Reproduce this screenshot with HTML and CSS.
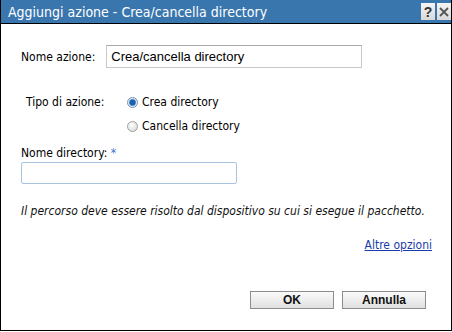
FILE: index.html
```html
<!DOCTYPE html>
<html>
<head>
<meta charset="utf-8">
<link rel="stylesheet" href="styles.css">
</head>
<body>
<div class="dialog">
  <div class="titlebar">
    <span class="title">Aggiungi azione - Crea/cancella directory</span>
    <div class="tbtns">
      <span class="tbtn help">?</span>
      <span class="tbtn close"><svg width="10" height="10" viewBox="0 0 10 10"><path d="M1 1L9 9M9 1L1 9" stroke="#555" stroke-width="1.8"/></svg></span>
    </div>
  </div>
  <div class="body">
    <div class="row-name">
      <label class="lbl">Nome azione:</label>
      <div class="input wide">Crea/cancella directory</div>
    </div>
    <div class="row-type">
      <span class="lbl">Tipo di azione:</span>
      <div class="radios">
        <div class="radio-item"><span class="radio on"></span><span>Crea directory</span></div>
        <div class="radio-item"><span class="radio"></span><span>Cancella directory</span></div>
      </div>
    </div>
    <div class="lbl dirlbl">Nome directory: <span class="req">*</span></div>
    <div class="input dir"></div>
    <p class="note">Il percorso deve essere risolto dal dispositivo su cui si esegue il pacchetto.</p>
    <div class="more"><a href="#">Altre opzioni</a></div>
    <div class="buttons">
      <button class="btn">OK</button>
      <button class="btn">Annulla</button>
    </div>
  </div>
</div>
</body>
</html>
```
FILE: styles.css
```css
html, body { margin: 0; padding: 0; background: #fff; }
.dialog {
  width: 450px; height: 330px;
  border: 1px solid #000;
  border-top: none;
  font-family: "DejaVu Sans Condensed", "DejaVu Sans", sans-serif;
  font-size: 12px;
  color: #000;
  display: flex; flex-direction: column;
}
.titlebar {
  height: 23px;
  background: #3a76ae;
  border-bottom: 1px solid #000;
  display: flex; align-items: center; justify-content: space-between;
  padding-left: 7px;
}
.title { color: #fff; font-size: 14px; }
.tbtns { display: flex; gap: 2px; align-self: flex-start; margin-top: 3px; }
.tbtn {
  width: 14px; height: 17px; background: linear-gradient(#f4f4f4, #d8d8d8);
  display: flex; align-items: center; justify-content: center;
  font-family: "Liberation Sans", sans-serif; font-weight: bold; font-size: 14px; color: #333;
}
.body { flex: 1; padding: 0 20px; }
.row-name { display: flex; align-items: center; margin-top: 21px; gap: 11px; }
.input {
  border: 1px solid #c8c8c8; border-top-color: #a8a8a8; background: #fff; box-sizing: border-box;
}
.input.wide {
  width: 256px; height: 23px; padding: 2px 4px;
  font-family: "Liberation Sans", sans-serif; font-size: 13px; line-height: 17px;
}
.row-type { display: flex; margin-top: 27px; padding-left: 5px; }
.row-type .lbl { width: 101px; }
.radios { display: flex; flex-direction: column; gap: 9px; }
.radio-item { display: flex; align-items: center; gap: 4px; line-height: 15px; }
.radio {
  width: 11px; height: 11px; border-radius: 50%;
  background: radial-gradient(circle at 40% 35%, #fff, #d4d4d4);
  border: 1px solid #a0a0a0; box-sizing: border-box;
}
.radio.on {
  background: radial-gradient(circle at 50% 50%, #1f5fa8 0 2.5px, #5a9ad8 3.2px, #e4eef8 4px);
  border-color: #7a8ea8;
}
.dirlbl { margin-top: 12px; }
.req { color: #3a76c8; }
.input.dir { width: 216px; height: 22px; border-color: #a8c4e0; margin-top: 2px; border-radius: 2px; }
.note { font-style: italic; margin: 20px 0 0; color: #111; }
.more { text-align: right; margin-top: 20px; margin-right: -1px; }
.more a { color: #1a3ca8; }
.buttons { display: flex; justify-content: flex-end; gap: 8px; margin-top: 39px; margin-right: 5px; }
.btn {
  width: 84px; height: 18px; border: 1px solid #8c8c8c; background: linear-gradient(#fafafa, #e0e0e0);
  font-family: "Liberation Sans", sans-serif; font-weight: bold; font-size: 12px; padding: 0; color: #111;
}
```
